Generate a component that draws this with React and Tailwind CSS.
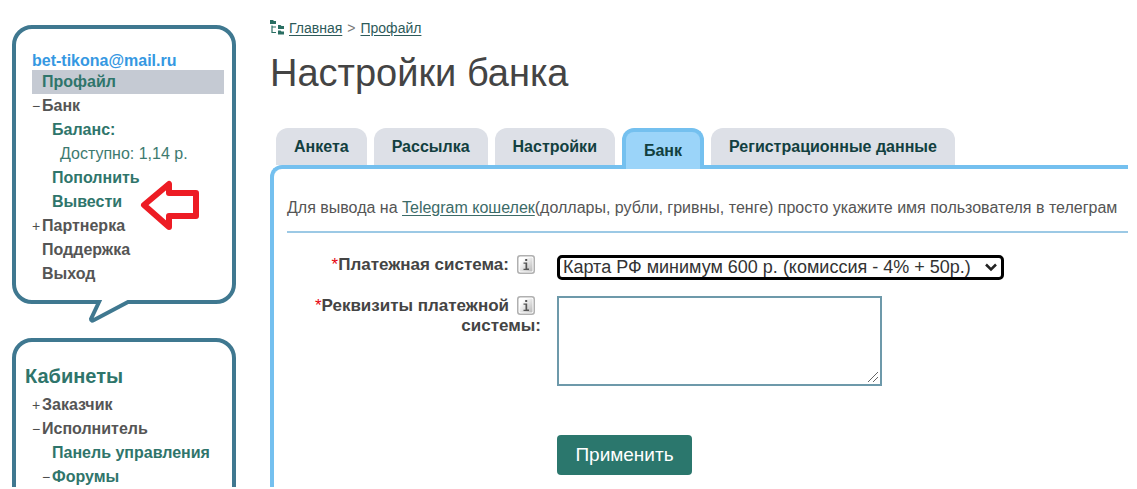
import clsx from "clsx";

const profileMenu = [
  { label: "Профайл", active: true, tone: "green" },
  { label: "Банк", mark: "−" },
  { label: "Баланс:", level: 1, tone: "green" },
  { label: "Доступно: 1,14 р.", level: 2, tone: "plain" },
  { label: "Пополнить", level: 1, tone: "green" },
  { label: "Вывести", level: 1, tone: "green", arrow: true },
  { label: "Партнерка", mark: "+" },
  { label: "Поддержка" },
  { label: "Выход" },
];

const cabinetMenu = [
  { label: "Заказчик", mark: "+" },
  { label: "Исполнитель", mark: "−" },
  { label: "Панель управления", level: 1, tone: "green" },
  { label: "Форумы", mark: "−", level: 1, tone: "green" },
];

const tabs = ["Анкета", "Рассылка", "Настройки", "Банк", "Регистрационные данные"];

function RedArrow() {
  return (
    <svg className="absolute left-[107px] -top-3 h-[54px] w-[62px]" viewBox="0 0 62 54" fill="none">
      <path d="M5 27 30 6V15H57V38H30V49Z" fill="#fff" stroke="#ed1c24" strokeWidth="6" strokeLinejoin="round" />
    </svg>
  );
}

function Menu({ items }) {
  return (
    <ul>
      {items.map((item) => (
        <li
          key={item.label}
          className={clsx(
            "relative flex h-6 items-center",
            item.active && "bg-[#c5cad3]",
            item.level === 1 && "pl-[10px]",
            item.level === 2 && "pl-[18px]"
          )}
        >
          <span className="w-[10px] shrink-0 text-sm text-[#4d4d4d]">{item.mark}</span>
          {item.tone === "plain" ? (
            <span className="text-base leading-[22px] text-[#3d7a70]">{item.label}</span>
          ) : (
            <a
              href="#"
              className={clsx(
                "whitespace-nowrap text-base font-bold leading-[22px]",
                item.tone === "green" ? "text-[#2f756b]" : "text-[#555555]"
              )}
            >
              {item.label}
            </a>
          )}
          {item.arrow && <RedArrow />}
        </li>
      ))}
    </ul>
  );
}

function InfoIcon() {
  return (
    <svg className="ml-2 mr-[6px] inline-block h-[19px] w-[18px] align-[-4px]" viewBox="0 0 18 19">
      <defs>
        <linearGradient id="info-bg" x1="0" y1="0" x2="1" y2="1">
          <stop offset="0.2" stopColor="#fff" />
          <stop offset="1" stopColor="#b8b8b8" />
        </linearGradient>
      </defs>
      <rect x="0.75" y="0.75" width="16.5" height="17.5" rx="2.5" fill="#fff" stroke="#b0b0b0" strokeWidth="1.5" />
      <rect x="2.5" y="2.5" width="13" height="14" rx="1" fill="url(#info-bg)" />
      <path d="M8.200 4h2v2h-2zM6.500 7.500h3.700v6H12V15H6.500v-1.200H8.500V8.700h-2z" fill="#555" />
    </svg>
  );
}

function TreeIcon() {
  return (
    <svg className="h-4 w-[14px]" viewBox="0 0 14 16" fill="#2a6e62">
      <path d="M0 0h3l1 1h2v3H0zM8 5h2.500l1 1H14v3H8zM8 10.500h2.500l1 1H14v3H8z" />
      <path d="M2 5.500V12.500h4M2 7h4" fill="none" stroke="#2a6e62" strokeWidth="1.200" />
    </svg>
  );
}

function Sidebar() {
  return (
    <aside className="flex w-56 shrink-0 flex-col gap-[34px]">
      <nav className="relative rounded-[20px] border-4 border-[#3f7890] px-2 pb-[14px] pt-[21px]">
        <div className="pl-2">
          <a href="#" className="block h-5 text-base font-bold leading-[22px] text-[#3598e2]">
            bet-tikona@mail.ru
          </a>
        </div>
        <div className="pl-2">
          <Menu items={profileMenu} />
        </div>
        <svg className="absolute left-[70px] top-full h-[23px] w-[46px]" viewBox="0 0 46 23" fill="none">
          <path d="M11 0H42V4H11z" fill="#fff" />
          <path d="M8 2H13L5 19C5 21 6 21 8 20L42 2H46" stroke="#3f7890" strokeWidth="4" />
        </svg>
      </nav>

      <nav className="h-[240px] rounded-[20px] border-4 border-[#3f7890] px-2 pt-[23px]">
        <h2 className="mb-[6px] pl-px text-xl font-bold leading-[22px] text-[#2f756b]">Кабинеты</h2>
        <div className="pl-2">
          <Menu items={cabinetMenu} />
        </div>
      </nav>
    </aside>
  );
}

function Tabs() {
  return (
    <div className="flex h-[41px] gap-[7px] pl-[6px]">
      {tabs.map((tab) =>
        tab === "Банк" ? (
          <button
            key={tab}
            className="h-[41px] rounded-t-xl border-4 border-b-0 border-[#74c0ef] bg-[#9bd4f9] px-[18px] text-base font-bold text-[#123f40] relative z-10"
          >
            {tab}
          </button>
        ) : (
          <button key={tab} className="h-[37px] rounded-t-xl bg-[#dde0e7] px-[18px] text-base font-bold text-[#123f40]">
            {tab}
          </button>
        )
      )}
    </div>
  );
}

function BankForm() {
  return (
    <form className="grid grid-cols-[254px_1fr] gap-x-4 pt-[22px] text-[#444444]">
      <label htmlFor="system" className="text-right text-[17px] font-bold leading-5">
        <span className="font-normal text-red-600">*</span>Платежная система:
        <InfoIcon />
      </label>
      <div className="relative mb-4 h-[25px] w-[447px]">
        <select
          id="system"
          className="block h-full w-full appearance-none rounded-[5px] border-[3px] border-black bg-white pl-[3px] text-[18px] leading-[19px] text-[#333333] outline-none"
        >
          <option>Карта РФ минимум 600 р. (комиссия - 4% + 50р.)</option>
        </select>
        <svg className="pointer-events-none absolute right-[7px] top-2 h-[9px] w-3" viewBox="0 0 12 9" fill="none">
          <path d="M1 1.500 6 6.500 11 1.500" stroke="#222" strokeWidth="2.500" />
        </svg>
      </div>

      <label htmlFor="details" className="text-right text-[17px] font-bold leading-5">
        <span className="font-normal text-red-600">*</span>Реквизиты платежной
        <InfoIcon />
        <br />
        системы:
      </label>
      <div className="relative w-[325px]">
        <textarea
          id="details"
          className="block h-[90px] w-full resize-none border-2 border-[#6d99aa] bg-white outline-none"
        />
        <svg className="pointer-events-none absolute bottom-[3px] right-[3px] h-3 w-3" viewBox="0 0 12 12" fill="none">
          <path d="M1 11 11 1M6 11 11 6" stroke="#666" strokeWidth="1" />
        </svg>
      </div>

      <button
        type="button"
        className="col-start-2 mt-[49px] h-10 w-[135px] rounded bg-[#2b776d] text-[19px] text-white"
      >
        Применить
      </button>
    </form>
  );
}

export default function App() {
  return (
    <div className="h-screen overflow-hidden bg-white pb-[2px] font-['Liberation_Sans',Arial,sans-serif]">
      <div className="flex h-full gap-[34px] overflow-hidden pl-3 pr-[9px]">
        <div className="pt-[25px]">
          <Sidebar />
        </div>
        <main className="min-w-0 grow pt-[19px]">
          <div className="flex h-[18px] items-center gap-[5px] text-sm text-[#777777]">
            <TreeIcon />
            <a href="#" className="text-[#2d5a5a] underline underline-offset-2">Главная</a>
            <span>&gt;</span>
            <a href="#" className="text-[#2d5a5a] underline underline-offset-2">Профайл</a>
          </div>
          <h1 className="mb-[31px] mt-[12px] text-[38px] leading-[48px] text-[#444444]">Настройки банка</h1>
          <Tabs />
          <section className="-mt-1 h-[400px] rounded-tl-xl border-l-4 border-t-4 border-[#74c0ef] pl-[13px]">
            <p className="whitespace-nowrap border-b-2 border-[#9cc9e5] pb-[13px] pt-[29px] text-base leading-5 text-[#555555]">
              Для вывода на{" "}
              <a href="#" className="text-[#3c6b68] underline underline-offset-2">Telegram кошелек</a>
              (доллары, рубли, гривны, тенге) просто укажите имя пользователя в телеграм
            </p>
            <BankForm />
          </section>
        </main>
      </div>
    </div>
  );
}
